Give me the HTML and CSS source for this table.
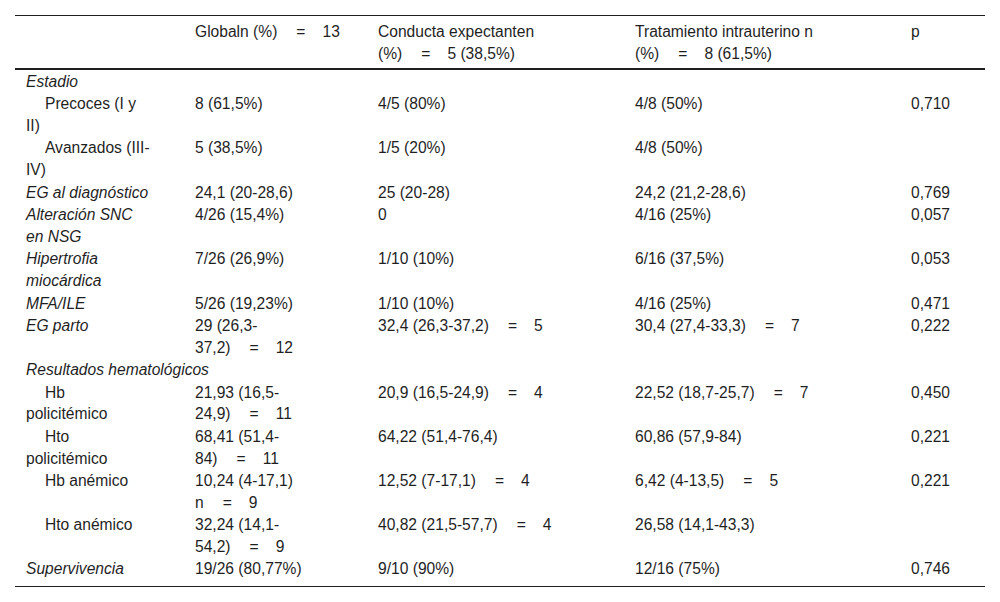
FILE: index.html
```html
<!DOCTYPE html>
<html lang="es">
<head>
<meta charset="utf-8">
<title>Tabla</title>
<link rel="stylesheet" href="styles.css">
</head>
<body>
<table class="data">
  <colgroup>
    <col class="c1"><col class="c2"><col class="c3"><col class="c4"><col class="c5">
  </colgroup>
  <thead>
    <tr>
      <th></th>
      <th>Globaln (%)<span class="eq">=</span>13</th>
      <th>Conducta expectanten (%)<span class="eq">=</span>5 (38,5%)</th>
      <th>Tratamiento intrauterino n (%)<span class="eq">=</span>8 (61,5%)</th>
      <th>p</th>
    </tr>
  </thead>
  <tbody>
    <tr><td class="it" colspan="5">Estadio</td></tr>
    <tr><td class="sub">Precoces (I y II)</td><td>8 (61,5%)</td><td>4/5 (80%)</td><td>4/8 (50%)</td><td>0,710</td></tr>
    <tr><td class="sub">Avanzados (III-IV)</td><td>5 (38,5%)</td><td>1/5 (20%)</td><td>4/8 (50%)</td><td></td></tr>
    <tr><td class="it">EG al diagnóstico</td><td>24,1 (20-28,6)</td><td>25 (20-28)</td><td>24,2 (21,2-28,6)</td><td>0,769</td></tr>
    <tr><td class="it">Alteración SNC en NSG</td><td>4/26 (15,4%)</td><td>0</td><td>4/16 (25%)</td><td>0,057</td></tr>
    <tr><td class="it">Hipertrofia miocárdica</td><td>7/26 (26,9%)</td><td>1/10 (10%)</td><td>6/16 (37,5%)</td><td>0,053</td></tr>
    <tr><td class="it">MFA/ILE</td><td>5/26 (19,23%)</td><td>1/10 (10%)</td><td>4/16 (25%)</td><td>0,471</td></tr>
    <tr><td class="it">EG parto</td><td>29 (26,3-37,2)<span class="eq">=</span>12</td><td>32,4 (26,3-37,2)<span class="eq">=</span>5</td><td>30,4 (27,4-33,3)<span class="eq">=</span>7</td><td>0,222</td></tr>
    <tr><td class="it" colspan="5">Resultados hematológicos</td></tr>
    <tr><td class="sub">Hb<br>policitémico</td><td>21,93 (16,5-24,9)<span class="eq">=</span>11</td><td>20,9 (16,5-24,9)<span class="eq">=</span>4</td><td>22,52 (18,7-25,7)<span class="eq">=</span>7</td><td>0,450</td></tr>
    <tr><td class="sub">Hto policitémico</td><td>68,41 (51,4-84)<span class="eq">=</span>11</td><td>64,22 (51,4-76,4)</td><td>60,86 (57,9-84)</td><td>0,221</td></tr>
    <tr><td class="sub">Hb anémico</td><td>10,24 (4-17,1) n<span class="eq">=</span>9</td><td>12,52 (7-17,1)<span class="eq">=</span>4</td><td>6,42 (4-13,5)<span class="eq">=</span>5</td><td>0,221</td></tr>
    <tr><td class="sub">Hto anémico</td><td>32,24 (14,1-54,2)<span class="eq">=</span>9</td><td>40,82 (21,5-57,7)<span class="eq">=</span>4</td><td>26,58 (14,1-43,3)</td><td></td></tr>
    <tr class="last"><td class="it">Supervivencia</td><td>19/26 (80,77%)</td><td>9/10 (90%)</td><td>12/16 (75%)</td><td>0,746</td></tr>
  </tbody>
</table>
</body>
</html>
```

FILE: styles.css
```css
html, body {
  background: #ffffff;
}
body {
  margin: 0;
  padding: 15px;
  font-family: "Liberation Sans", Arial, sans-serif;
  font-size: 15.6px;
  color: #1f1f1f;
}
.data {
  width: 970px;
  border-collapse: collapse;
  table-layout: fixed;
  border-top: 1px solid #1f1f1f;
  border-bottom: 1px solid #1f1f1f;
}
.c1 { width: 169px; }
.c2 { width: 183px; }
.c3 { width: 257px; }
.c4 { width: 276px; }
.c5 { width: 85px; }

.data th,
.data td {
  text-align: left;
  vertical-align: top;
  font-weight: normal;
  line-height: 21.7px;
  padding: 0.4px 0 0.4px 11px;
}
.data th {
  padding-top: 5px;
  padding-bottom: 4px;
  border-bottom: 2px solid #1f1f1f;
}
.data th:nth-child(1), .data td:nth-child(1) { padding-right: 31px; }
.data th:nth-child(2), .data td:nth-child(2) { padding-right: 25px; }
.data th:nth-child(3), .data td:nth-child(3) { padding-right: 46px; }
.data th:nth-child(4), .data td:nth-child(4) { padding-right: 65px; }
.data th:nth-child(5), .data td:nth-child(5) { padding-right: 0; }
.data td[colspan] { padding-right: 0; }

.data .last td {
  padding-bottom: 6px;
}
.data .it {
  font-style: italic;
}
.data .sub {
  text-indent: 19px;
}
.eq {
  margin: 0 17px 0 19px;
}
```
